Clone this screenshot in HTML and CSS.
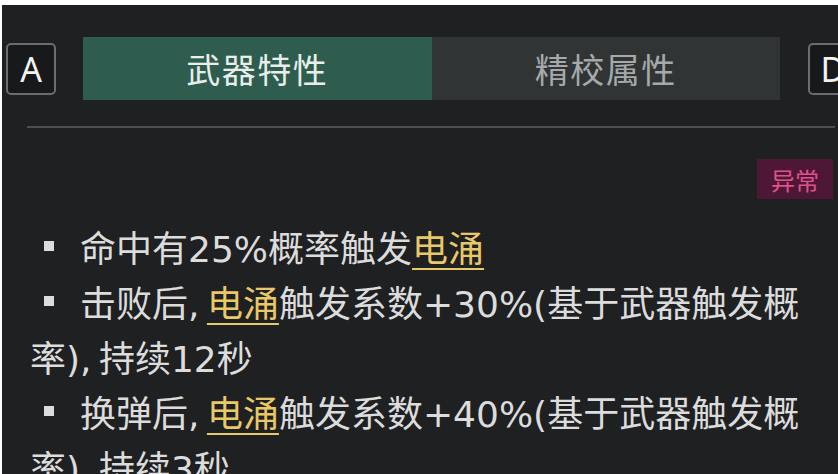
FILE: index.html
```html
<!DOCTYPE html>
<html lang="zh">
<head>
<meta charset="utf-8">
<link rel="stylesheet" href="styles.css">
</head>
<body>
<div class="screen">
  <div class="tabbar">
    <div class="key">A</div>
    <div class="tabs">
      <div class="tab active">武器特性</div>
      <div class="tab">精校属性</div>
    </div>
    <div class="key">D</div>
  </div>
  <div class="divider"></div>
  <div class="badge-row"><span class="badge">异常</span></div>
  <div class="list">
    <p class="item"><span class="dot"></span>命中有25%概率触发<span class="kw">电涌</span></p>
    <p class="item"><span class="dot"></span>击败后<span class="sep">, </span><span class="kw">电涌</span>触发系数+30%(基于武器触发概率)<span class="sep">, </span>持续12秒</p>
    <p class="item"><span class="dot"></span>换弹后<span class="sep">, </span><span class="kw">电涌</span>触发系数+40%(基于武器触发概率)<span class="sep">, </span>持续3秒</p>
  </div>
</div>
</body>
</html>
```
FILE: styles.css
```css
html, body {
  margin: 0;
  padding: 0;
  background: #ffffff;
  overflow: hidden;
}
body {
  width: 838px;
  height: 474px;
  font-family: "Noto Sans CJK SC", "Noto Sans", sans-serif;
}
.screen {
  margin: 5px 0 0 2px;
  height: 469px;
  background: #1f2022;
  overflow: hidden;
}
.tabbar {
  display: flex;
  align-items: center;
  padding-top: 32px;
  height: 63px;
}
.key {
  flex: none;
  box-sizing: border-box;
  width: 50px;
  height: 52px;
  margin-left: 4px;
  border: 2px solid #6c6d6e;
  border-radius: 5px;
  background: #18191a;
  color: #f2f2f2;
  font-family: "Noto Sans", sans-serif;
  font-size: 34px;
  line-height: 48px;
  text-align: center;
}
.tabs {
  flex: none;
  display: flex;
  margin: 0 24px 0 27px;
  width: 697px;
  height: 63px;
}
.tab {
  flex: 1;
  display: flex;
  align-items: center;
  justify-content: center;
  background: #303435;
  color: #a6a9a9;
  font-size: 34px;
  letter-spacing: 1.5px;
}
.tab.active {
  background: #2e5d4f;
  color: #e9eeeb;
}
.divider {
  margin: 26px 3px 0 25px;
  height: 2px;
  background: #4c4e50;
}
.badge-row {
  display: flex;
  justify-content: flex-end;
  margin-top: 31px;
  padding-right: 5px;
}
.badge {
  width: 76px;
  height: 40px;
  display: flex;
  align-items: center;
  justify-content: center;
  background: #4e1736;
  color: #e0528c;
  font-size: 24px;
}
.list {
  margin-top: 23px;
  padding: 0 24px 0 28px;
}
.item {
  margin: 0;
  color: #dcdcdc;
  font-family: "DejaVu Sans", "Noto Sans CJK SC", sans-serif;
  font-size: 36px;
  line-height: 55px;
}
.item .sep {
  letter-spacing: -2px;
}
.dot {
  display: inline-block;
  width: 10px;
  height: 10px;
  margin: 0 26px 0 14px;
  background: #dcdcdc;
  vertical-align: 11px;
}
.kw {
  color: #e9c867;
  text-decoration: underline;
  text-decoration-thickness: 2px;
  text-underline-offset: 6px;
}
```
